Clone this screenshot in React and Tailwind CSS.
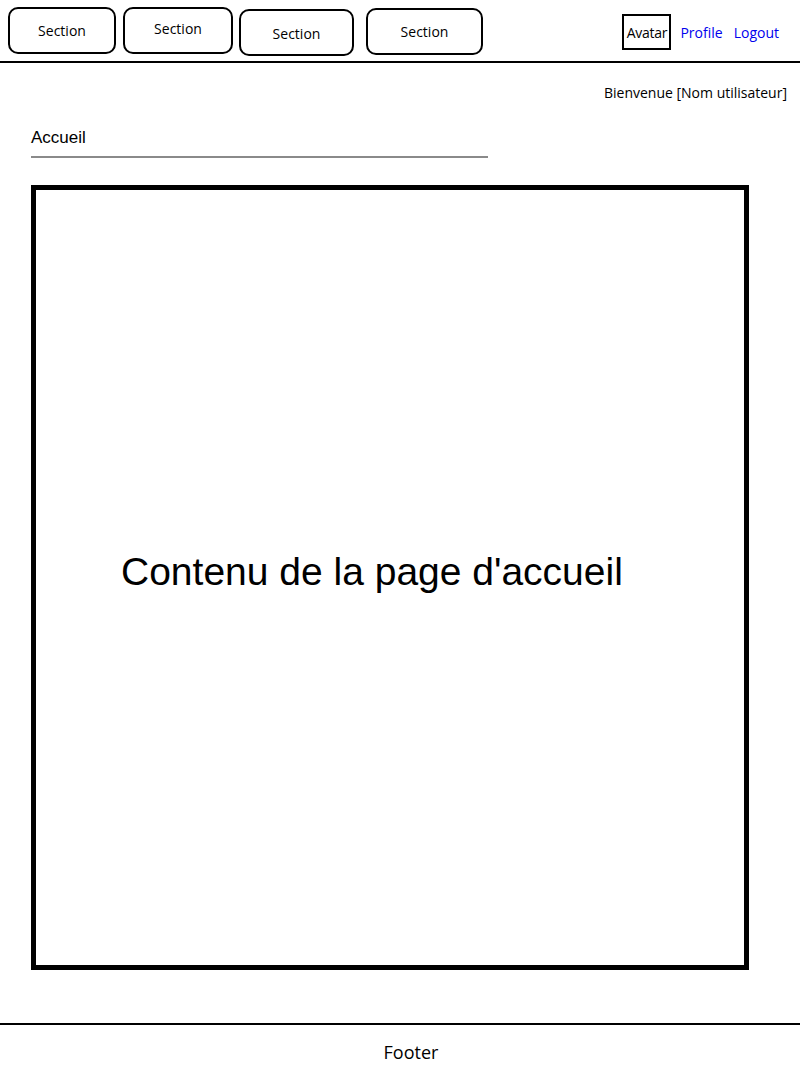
const sections = [
  { w: "w-[108px]", ml: "ml-[8px]", mt: "mt-[7px]", pt: "pt-[0px]" },
  { w: "w-[110px]", ml: "ml-[7px]", mt: "mt-[7px]", pt: "pb-[5px]" },
  { w: "w-[115px]", ml: "ml-[6px]", mt: "mt-[9px]", pt: "pt-[1px]" },
  { w: "w-[117px]", ml: "ml-[12px]", mt: "mt-[8px]", pt: "pt-[0px]" },
];

const ui = { fontFamily: '"Open Sans", "Noto Sans", sans-serif' };
const arial = { fontFamily: '"Liberation Sans", Arial, sans-serif' };

const App = () => {
  return (
    <div className="flex h-[1080px] w-[800px] flex-col bg-white text-black" style={ui}>
      <header className="flex h-[63px] items-start border-b-2 border-black">
        {sections.map((s, i) => (
          <div
            key={i}
            className={`${s.w} ${s.ml} ${s.mt} ${s.pt} flex h-[47px] items-center justify-center rounded-[10px] border-2 border-black text-[14px]`}
          >
            Section
          </div>
        ))}
        <div className="ml-auto mr-[21px] mt-[14px] flex items-center">
          <div className="flex h-[36px] w-[49px] items-center justify-center border-2 border-black text-[14px] tracking-[-0.3px]">
            Avatar
          </div>
          <a className="ml-[9px] text-[14px] text-[#0000ee]">Profile</a>
          <a className="ml-[11px] text-[14px] text-[#0000ee]">Logout</a>
        </div>
      </header>

      <main className="flex flex-1 flex-col pl-[31px]">
        <p className="mt-[19px] self-end pr-[13px] text-[14px]">Bienvenue [Nom utilisateur]</p>
        <div className="mt-[25px] w-[457px] border-b-2 border-[#8a8a8a] pb-[8px]">
          <h1 className="text-[17px] leading-[20px]" style={arial}>
            Accueil
          </h1>
        </div>
        <section className="mt-[27px] flex h-[785px] w-[718px] items-center border-[5px] border-black pb-[12px] pl-[85px]">
          <p className="text-[39px] leading-none" style={arial}>
            Contenu de la page d'accueil
          </p>
        </section>
      </main>

      <footer className="flex h-[57px] items-center justify-center border-t-2 border-black pl-[22px]">
        <span className="text-[18px]">Footer</span>
      </footer>
    </div>
  );
};

export default App;
